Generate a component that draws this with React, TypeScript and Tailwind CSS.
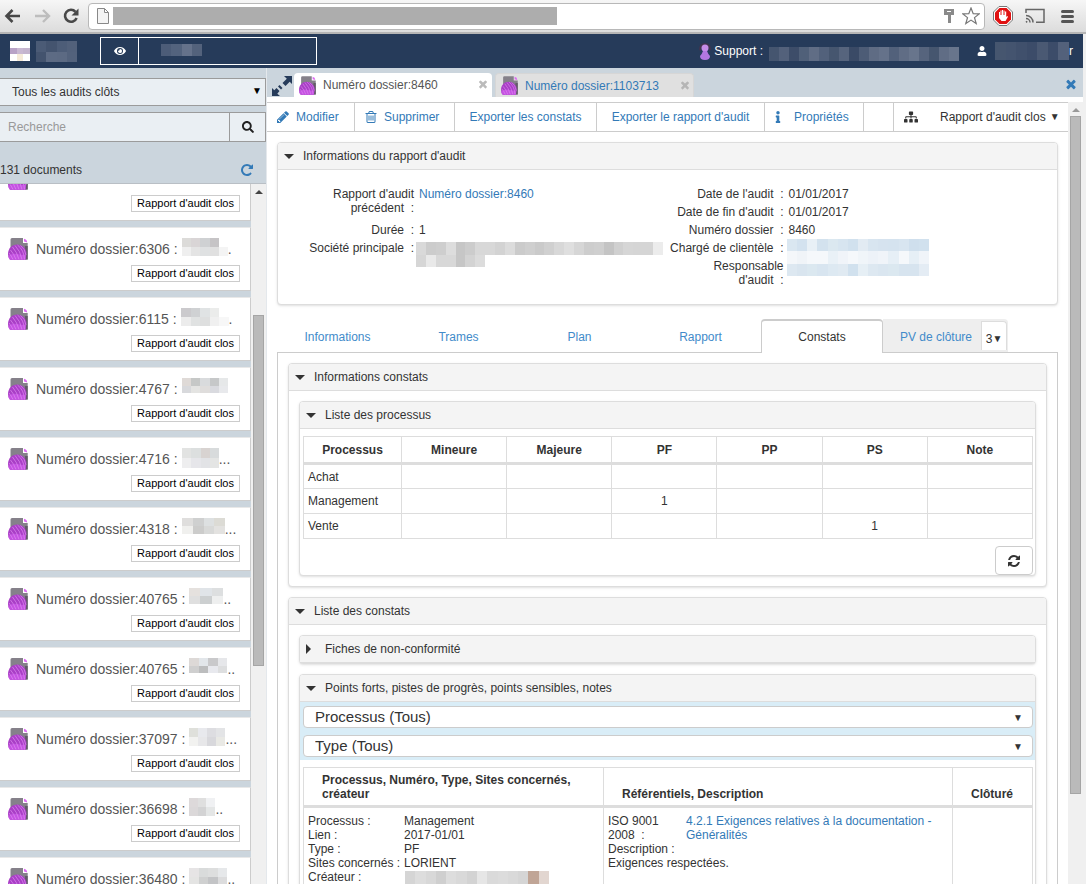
import type { ReactNode } from 'react';
import { FaEye, FaInfo, FaSearch, FaSitemap, FaUser } from 'react-icons/fa';

type IconProps = { d: string; className?: string };

function Glyph({ d, className }: IconProps) {
  return (
    <svg viewBox="0 0 1792 1792" fill="currentColor" aria-hidden="true" className={className}>
      <path d={d} />
    </svg>
  );
}

const PENCIL =
  'M491 1536l91-91-235-235-91 91v107h128v128h107zm523-928q0-22-22-22-10 0-17 7l-542 542q-7 7-7 17 0 22 22 22 10 0 17-7l542-542q7-7 7-17zm-54-192l416 416-832 832h-416v-416zm683 96q0 53-37 90l-166 166-416-416 166-165q36-38 90-38 53 0 91 38l235 234q37 39 37 91z';
const TRASH =
  'M704 736v576q0 14-9 23t-23 9h-64q-14 0-23-9t-9-23v-576q0-14 9-23t23-9h64q14 0 23 9t9 23zm256 0v576q0 14-9 23t-23 9h-64q-14 0-23-9t-9-23v-576q0-14 9-23t23-9h64q14 0 23 9t9 23zm256 0v576q0 14-9 23t-23 9h-64q-14 0-23-9t-9-23v-576q0-14 9-23t23-9h64q14 0 23 9t9 23zm128 724v-948h-896v948q0 22 7 40.5t14.5 27 10.5 8.5h832q3 0 10.5-8.5t14.5-27 7-40.5zm-672-1076h448l-48-117q-7-9-17-11h-317q-10 2-17 11zm928 32v64q0 14-9 23t-23 9h-96v948q0 83-47 143.5t-113 60.5h-832q-66 0-113-58.5t-47-141.5v-952h-96q-14 0-23-9t-9-23v-64q0-14 9-23t23-9h309l70-167q15-37 54-63t79-26h320q40 0 79 26t54 63l70 167h309q14 0 23 9t9 23z';
const TIMES =
  'M1490 1322q0 40-28 68l-136 136q-28 28-68 28t-68-28l-294-294-294 294q-28 28-68 28t-68-28l-136-136q-28-28-28-68t28-68l294-294-294-294q-28-28-28-68t28-68l136-136q28-28 68-28t68 28l294 294 294-294q28-28 68-28t68 28l136 136q28 28 28 68t-28 68l-294 294 294 294q28 28 28 68z';
const REFRESH =
  'M1639 1056q0 5-1 7-64 268-268 434.5t-478 166.5q-146 0-282.5-55t-243.5-157l-129 129q-19 19-45 19t-45-19-19-45v-448q0-26 19-45t45-19h448q26 0 45 19t19 45-19 45l-137 137q71 66 161 102t187 36q134 0 250-65t186-179q11-17 53-117 8-23 30-23h192q13 0 22.5 9.5t9.5 22.5zm25-800v448q0 26-19 45t-45 19h-448q-26 0-45-19t-19-45 19-45l138-138q-148-137-349-137-134 0-250 65t-186 179q-11 17-53 117-8 23-30 23h-199q-13 0-22.5-9.5t-9.5-22.5v-7q65-268 270-434.5t480-166.5q146 0 284 55.5t245 156.5l130-129q19-19 45-19t45 19 19 45z';
const REPEAT =
  'M1664 256v448q0 26-19 45t-45 19h-448q-42 0-59-40-17-39 14-69l138-138q-148-137-349-137-104 0-198.5 40.5t-163.5 109.5-109.5 163.5-40.5 198.5 40.5 198.5 109.5 163.5 163.5 109.5 198.5 40.5q119 0 225-52t179-147q7-10 23-12 15 0 25 9l137 138q9 8 9.5 20.5t-7.5 22.5q-109 132-264 204.5t-327 72.5q-156 0-298-61t-245-164-164-245-61-298 61-298 164-245 245-164 298-61q147 0 284.5 55.5t244.5 156.5l130-129q29-31 70-14 39 17 39 59z';

// Masked value: a grid of flat cells, one string of hex colours per row
function Mosaic({ rows, className }: { rows: string[]; className: string }) {
  return (
    <svg
      viewBox={`0 0 100 ${rows.length * 10}`}
      preserveAspectRatio="none"
      shapeRendering="crispEdges"
      aria-hidden="true"
      className={`shrink-0 ${className}`}
    >
      {rows.map((row, y) => {
        const cells = row.split(' ');
        const w = 100 / cells.length;
        return cells.map((c, x) => (
          <rect key={`${y}-${x}`} x={x * w} y={y * 10} width={w} height="10" fill={`#${c}`} />
        ));
      })}
    </svg>
  );
}

function DocIcon({ className }: { className: string }) {
  return (
    <svg viewBox="0 0 20 22" aria-hidden="true" className={`shrink-0 ${className}`}>
      <path d="M2.500 1.500Q2.500 0 4 0h11v5h4.700v16.500H2.500z" fill="#85818a" />
      <path d="M17 8h2.700v13.500H16z" fill="#625a68" />
      <path d="M16 .8q3 .7 3.200 3.700L16 3.500z" fill="#dd6cf2" />
      <path d="M0 16C0 10.500 4 6.500 9 6.500c5.500 0 9 4 9.500 8.500L17.500 21.800H2Q0 20 0 16z" fill="#a93fc6" />
      <path d="M.3 18Q5 15 9 16t9 1l-.6 4.800H2Q.5 20.500.3 18z" fill="#c552e2" />
      <g fill="none" stroke="#e08df2" strokeWidth=".7">
        <path d="M16.500 21.500Q16 12 9.500 7" />
        <path d="M14 21.500Q12.500 13 7 7.500" />
        <path d="M11 21.500Q9 14 4.500 9" />
        <path d="M8 21.500Q6 16 2.500 12" />
        <path d="M5 21.500Q3.500 18 1 15" />
        <path d="M18 17Q17 10.500 12.500 7.500" />
      </g>
    </svg>
  );
}

function BrowserBar() {
  return (
    <div className="flex h-[34px] shrink-0 items-center border-b-2 border-[#b5b5b5] bg-linear-to-b from-[#f6f6f6] to-[#dcdcdc] pl-1 pr-3">
      <button aria-label="Précédent">
        <svg viewBox="0 0 18 16" className="h-4 w-[18px]" fill="none" stroke="#484848" strokeWidth="2.600">
          <path d="M16 8H3M8.500 2L2.500 8l6 6" />
        </svg>
      </button>
      <button aria-label="Suivant" className="ml-3">
        <svg viewBox="0 0 18 16" className="h-4 w-[18px]" fill="none" stroke="#bdbdbd" strokeWidth="2.400">
          <path d="M1 8h13M9 2l6 6-6 6" />
        </svg>
      </button>
      <button aria-label="Actualiser" className="ml-2.5">
        <svg viewBox="0 0 18 16" className="h-4 w-[18px]">
          <path d="M13.500 3.800A6 6 0 1 0 14.600 10" fill="none" stroke="#484848" strokeWidth="2.600" />
          <path d="M16.500 .5v7h-7z" fill="#484848" />
        </svg>
      </button>
      <div className="ml-2 flex h-[27px] grow items-center rounded-sm border border-[#b8b8b8] bg-white px-2">
        <svg viewBox="0 0 12 16" className="h-4 w-3" fill="#f4f4f4" stroke="#888">
          <path d="M.5.5h7l4 4v11H.5zM7.500.5v4h4" />
        </svg>
        <div className="ml-1 h-[18px] w-[444px] bg-[#adadad]" />
        <svg viewBox="0 0 10 16" className="ml-auto h-4 w-2.5" fill="#8a8a8a">
          <path d="M0 1h10v6H7v8H4V7H0zM3 3v1h4V3z" fillRule="evenodd" />
        </svg>
        <svg viewBox="0 0 18 18" className="-mr-1 ml-2 h-[18px] w-[18px]" fill="none" stroke="#777" strokeWidth="1.200">
          <path d="M9 1l2.200 5.600 6 .3-4.700 3.700 1.700 5.900L9 13.100l-5.200 3.400 1.700-5.900L.8 6.900l6-.3z" />
        </svg>
      </div>
      <svg viewBox="0 0 20 20" className="ml-2 h-5 w-5">
        <path d="M6 .5h8L19.500 6v8L14 19.500H6L.5 14V6z" fill="#fff" stroke="#777" />
        <path d="M6.500 2h7L18 6.500v7L13.500 18h-7L2 13.500v-7z" fill="#e01212" />
        <path d="M6 9V6h1v3h.5V4.500h1V9H9V4h1v5h.5V4.500h1V9h.5V5.500h1.200V11l1-1 .8.800L12.500 15h-4L6 12z" fill="#fff" />
      </svg>
      <svg viewBox="0 0 20 16" className="ml-3 h-4 w-5" fill="none" stroke="#666" strokeWidth="1.500">
        <path d="M1 5V1.500h18v12.700h-8M1 7.500a7 7 0 0 1 7 7M1 10.500a4 4 0 0 1 4 4M1 13.200l1.200 1.200" />
      </svg>
      <button aria-label="Menu" className="ml-4 flex w-[13px] flex-col gap-0.5">
        <span className="h-[3px] rounded-sm bg-[#555]" />
        <span className="h-[3px] rounded-sm bg-[#555]" />
        <span className="h-[3px] rounded-sm bg-[#555]" />
      </button>
    </div>
  );
}

function Header() {
  return (
    <header className="flex h-[34px] shrink-0 items-center bg-[#263b5a] px-2.5 text-white">
      <Mosaic rows={['ffffff ffffff ffffff', 'b8a2c6 c9b8d2 c4b4ce', 'ffffff f5ead8 ffffff']} className="h-5 w-5" />
      <Mosaic rows={['4b5b76 44546f 4d5d78 52617b', '43536e 5d6b84 5c6a83 53627c']} className="ml-1.5 h-[21px] w-[41px]" />
      <div className="ml-[23px] flex h-7 w-[217px] border border-white">
        <button aria-label="Afficher" className="flex w-[38px] items-center justify-center border-r border-white">
          <FaEye className="h-3 w-3" />
        </button>
        <Mosaic rows={['4c5c78 53637e 65728b 53627c']} className="ml-[22px] mt-1.5 h-3 w-[41px]" />
      </div>
      <svg viewBox="0 0 12 17" className="ml-auto h-[17px] w-3" aria-hidden="true">
        <path d="M0 7Q0 0 6 0t6 7l-2 1V5H2v3z" fill="#41344f" />
        <circle cx="6" cy="5" r="3.500" fill="#c58be8" />
        <path d="M4 8h4q1 3 3 5 0 4-5 4t-5-4q2-2 3-5z" fill="#b377e0" />
      </svg>
      <span className="ml-[3px]">Support :</span>
      <Mosaic
        rows={['45556f 53617b 3d4d69 506079 606d85 52617b 46566f 56647d 3a4a66 4d5c76 5f6c84 65728a 52617b 606d85 68758c 56647d 46566f 606d85 68758c']}
        className="ml-1.5 mt-1.5 h-3.5 w-[190px]"
      />
      <FaUser className="ml-[18px] h-2.5 w-2.5" />
      <Mosaic rows={['46566f 44546f 40506c 3c4c69 4a5973 3c4c69 53617b']} className="ml-2 h-[18px] w-[74px]" />
      <span>r</span>
    </header>
  );
}

type Audit = { num?: string; mask: string[]; tail: string; size: string };

const audits: Audit[] = [
  { mask: [], tail: '', size: '' },
  { num: '6306', mask: ['dcdbd9 d9d5d6 cfd1d3 c6c4c6 ffffff', 'efefef e4e4e4 dfe1e2 e0e0e0 f4f4f4'], tail: '.', size: 'h-[18px] w-[46px]' },
  { num: '6115', mask: ['cbcacd cfd1d3 e0e3e4 ebeceb ffffff', 'ececec e0e2e2 dedfdf f0f0f0 f7f7f7'], tail: '.', size: 'h-[18px] w-12' },
  { num: '4767', mask: ['dfdad7 c6c8c7 d9dbdd c6c8c9 e6e8e9', 'd8d9dc e4e4e2 dfdddc d9dadf e8e9ec'], tail: '', size: 'h-[15px] w-[46px]' },
  { num: '4716', mask: ['e2e3e2 dcdfdf d8d3d1 d8dbdc', 'eeeeef e6e6ea e2e3e6 e4e5e4'], tail: '...', size: 'h-5 w-[37px]' },
  { num: '4318', mask: ['dfdedd cfd0d0 dde0e1 dcdbd5', 'f0f0ee cccccb d8d9d8 e3e2e0'], tail: '...', size: 'h-4 w-[43px]' },
  { num: '40765', mask: ['e5e1de e0e4e8 dddfe0', 'dfdfdf cccfd0 eeefef'], tail: '..', size: 'h-4 w-[34px]' },
  { num: '40765', mask: ['ddd9d7 e2e6ea c9c9cb e6e7ea', 'cfcfcf bcbdbe e8e9ee dddedf'], tail: '..', size: 'h-[15px] w-[38px]' },
  { num: '37097', mask: ['dfe0db e8e9ed dddde1 e3e4e6', 'f2f2f0 e7e7e9 d8d8dc e9e9e5'], tail: '...', size: 'h-[18px] w-9' },
  { num: '36698', mask: ['ddd9da dfdfdf f0f1f3', 'dbd8d9 d3d3d4 e4e6e6'], tail: '..', size: 'h-[18px] w-[26px]' },
  { num: '36480', mask: ['e6e4e5 d9dbdb dddede e6e8ea', 'e4e4e3 cfd0d0 c3c4c6 dcdcdd'], tail: '..', size: 'h-[18px] w-[38px]' },
];

function Sidebar() {
  return (
    <aside className="flex w-[267px] shrink-0 flex-col border-r border-[#e4e8ec] bg-[#cbd5dd]">
      <div className="relative mt-2.5">
        <select
          aria-label="Liste"
          className="h-7 w-full appearance-none border border-l-0 border-[#9b9b9b] bg-[#eaeff3] pl-3 text-xs text-[#333]"
        >
          <option>Tous les audits clôts</option>
        </select>
        <span className="pointer-events-none absolute right-1 top-1.5 text-[10px] leading-[14px] text-black">▼</span>
      </div>
      <form className="mt-1.5 flex h-[31px] border border-l-0 border-[#9b9b9b] bg-[#eaeff3]">
        <input
          aria-label="Recherche"
          placeholder="Recherche"
          className="min-w-0 grow pl-2 text-xs placeholder:text-[#999]"
        />
        <button type="button" aria-label="Rechercher" className="flex w-9 items-center justify-center border-l border-[#9b9b9b]">
          <FaSearch className="h-3 w-3 text-[#222]" />
        </button>
      </form>
      <div className="flex h-11 items-end justify-between border-b border-[#b9bfc5] pb-1.5 pr-3">
        <span>131 documents</span>
        <button aria-label="Rafraîchir la liste">
          <Glyph d={REPEAT} className="h-3.5 w-3.5 text-[#337ab7]" />
        </button>
      </div>
      <div className="flex min-h-0 grow overflow-hidden">
        <ul className="-mt-[27px] flex h-max min-w-0 grow flex-col gap-1.5">
          {audits.map((a, i) => (
            <li key={i} className="flex h-16 flex-col border border-l-0 border-[#ccc] border-t-[#e8e8e8] bg-white pl-2 pr-2.5 pt-2.5">
              <div className="flex h-[22px] text-sm leading-[22px] text-[#555]">
                <DocIcon className="mr-2 h-[22px] w-5" />
                {a.num && (
                  <>
                    <span className="whitespace-nowrap">Numéro dossier:{a.num} :</span>
                    <Mosaic rows={a.mask} className={`ml-1 ${a.size}`} />
                    <span>{a.tail}</span>
                  </>
                )}
              </div>
              <span className="mt-[5px] h-[17px] self-end border border-[#ccc] px-[5px] text-[11px] leading-[15px] text-black">
                Rapport d'audit clos
              </span>
            </li>
          ))}
        </ul>
        <div className="flex w-[15px] shrink-0 flex-col items-center bg-[#f0f0f0]">
          <span className="mt-1.5 border-x-4 border-b-4 border-x-transparent border-b-[#444]" />
          <div className="mt-[121px] h-[351px] w-[11px] border border-[#a5a5a5] bg-[#bababa]" />
        </div>
      </div>
    </aside>
  );
}

function DocTabs() {
  return (
    <div className="flex h-[29px] shrink-0 items-end bg-[#cbd5dd] pr-[5px]">
      <button aria-label="Agrandir" className="ml-[5px] pb-px">
        <svg viewBox="0 0 20 20" className="h-5 w-5" fill="#263b5a">
          <path d="M20 0v8l-2.300-2.300-4.200 4.300-3-3 4.300-4.200L12 0z" />
          <path d="M0 20v-8l2.300 2.300 2.200-2.300 3 3-2.200 2.700L8 20z" />
          <path d="M7.500 9l3 3-1.500 1.500-3-3z" />
        </svg>
      </button>
      <div className="ml-0.5 flex h-6 w-[198px] items-center rounded-t bg-white pl-[5px] pr-[3px]">
        <DocIcon className="h-[19px] w-[17px]" />
        <span className="ml-[7px] text-[#555]">Numéro dossier:8460</span>
        <button aria-label="Fermer" className="ml-auto pb-0.5">
          <Glyph d={TIMES} className="h-3 w-3 text-[#bbb]" />
        </button>
      </div>
      <div className="ml-[3px] flex h-6 w-[199px] items-center rounded-t border border-b-0 border-[#d6d6d6] bg-[#e0e0e0] pl-[5px] pr-0.5">
        <DocIcon className="h-[19px] w-[17px]" />
        <a href="#" className="ml-[7px] text-[#337ab7]">Numéro dossier:1103713</a>
        <button aria-label="Fermer" className="ml-auto pb-0.5">
          <Glyph d={TIMES} className="h-3 w-3 text-[#b5b5b5]" />
        </button>
      </div>
      <button aria-label="Tout fermer" className="ml-auto self-center pt-0.5">
        <Glyph d={TIMES} className="h-3.5 w-3.5 text-[#337ab7]" />
      </button>
    </div>
  );
}

function Toolbar() {
  const cell = 'flex shrink-0 items-center border-r border-[#ccc]';
  return (
    <div className="flex h-[30px] border-y border-[#ccc] text-[#337ab7]">
      <button className={`${cell} w-[88px] pl-[9px]`}>
        <Glyph d={PENCIL} className="mr-1.5 h-3.5 w-3.5" />
        Modifier
      </button>
      <button className={`${cell} w-[100px] pl-[9px]`}>
        <Glyph d={TRASH} className="mr-1.5 h-3.5 w-3.5" />
        Supprimer
      </button>
      <button className={`${cell} w-[142px] justify-center`}>Exporter les constats</button>
      <button className={`${cell} w-[168px] justify-center`}>Exporter le rapport d'audit</button>
      <button className={`${cell} w-[99px] pl-[7px]`}>
        <FaInfo className="mr-2.5 h-3 w-3" />
        Propriétés
      </button>
      <div className={`${cell} w-[30px]`} />
      <button className="flex grow items-center pl-2.5 text-[#333]">
        <FaSitemap className="mr-[22px] h-3.5 w-3.5" />
        Rapport d'audit clos
        <span className="ml-1 text-[10px]">▼</span>
      </button>
    </div>
  );
}

type PanelProps = { title: string; open?: boolean; className?: string; children?: ReactNode };

function Panel({ title, open = true, className = '', children }: PanelProps) {
  return (
    <section className={`rounded border border-[#ddd] bg-white shadow-sm ${className}`}>
      <button
        aria-expanded={open}
        className="flex h-[27px] w-full items-center rounded-t-[3px] border-b border-[#ddd] bg-[#f4f4f4] pl-1.5 text-left"
      >
        <span className="flex w-[19px]">
          {open ? (
            <span className="border-x-5 border-t-5 border-x-transparent border-t-[#333]" />
          ) : (
            <span className="border-y-5 border-l-5 border-y-transparent border-l-[#333]" />
          )}
        </span>
        {title}
      </button>
      {children}
    </section>
  );
}

function Label({ text, className = '' }: { text: string; className?: string }) {
  return <dt className={`pr-px text-right ${className}`}>{`${text}\u00a0\u00a0:`}</dt>;
}

function ReportInfo() {
  return (
    <Panel title="Informations du rapport d'audit" className="h-[163px]">
      <div className="mx-5 mt-[17px] grid grid-cols-2">
        <dl className="grid auto-rows-[18px] grid-cols-[117px_1fr] content-start gap-x-1">
          <Label text="Rapport d'audit précédent" className="row-span-2" />
          <dd className="row-span-2">
            <a href="#" className="text-[#337ab7]">Numéro dossier:8460</a>
          </dd>
          <Label text="Durée" />
          <dd>1</dd>
          <Label text="Société principale" />
          <dd className="row-span-2 -ml-[3px] pt-px">
            <Mosaic
              rows={[
                'd9d9d9 cccccc cecece dddddd c6c6c6 cccccc d8d8d8 d8d8d8 d3d3d3 dcdcdc cbcbcb cfcfcf cacaca d0d0d0 d8d8d8 dfdfdf d6d6d6 cdcdcd cfcfcf c4c4c4 d0d0d0 d6d6d6 d5d5d5 d5d5d5 ececec',
                'd6d6d6 e9e9e9 d8d8d8 d8d8d8 c6c6c6 d3d3d3 dcdcdc ffffff ffffff ffffff ffffff ffffff ffffff ffffff ffffff ffffff ffffff ffffff ffffff ffffff ffffff ffffff ffffff ffffff ffffff',
              ]}
              className="h-[25px] w-[247px]"
            />
          </dd>
        </dl>
        <dl className="grid auto-rows-[18px] grid-cols-[117px_1fr] content-start gap-x-1">
          <Label text="Date de l'audit" />
          <dd>01/01/2017</dd>
          <Label text="Date de fin d'audit" />
          <dd>01/01/2017</dd>
          <Label text="Numéro dossier" />
          <dd>8460</dd>
          <Label text="Chargé de clientèle" />
          <dd className="row-span-2 -ml-0.5 -mt-0.5">
            <Mosaic
              rows={[
                'dae7f1 d3e2ef e8f0f6 d3e2ee dbe8f0 d7e5f0 d1e1ee e2ebf3 d8e5f0 d6e3ef d5e3ef d8e5f0 cfdfed d1e1ee',
                'f4f7fa f0f4f8 f5f8fb f5f8fb e9f1f7 f0f4f9 f5f8fb f0f5f9 edf2f8 f0f4f9 e6eff6 f5f8fb e6eff6 f0f4f9',
                'dde8f1 d9e5ef dbe8f0 d8e5f0 dde9f2 e0eaf2 d1e1ee e6eff5 dde8f1 dae6f0 dbe8f0 d7e4ef d7e4ef e4ecf4',
              ]}
              className="h-[37px] w-[142px]"
            />
          </dd>
          <Label text="Responsable d'audit" />
        </dl>
      </div>
    </Panel>
  );
}

const columns = ['Processus', 'Mineure', 'Majeure', 'PF', 'PP', 'PS', 'Note'];
const processes = [
  ['Achat', '', '', '', '', '', ''],
  ['Management', '', '', '1', '', '', ''],
  ['Vente', '', '', '', '', '1', ''],
];

function ProcessTable() {
  return (
    <table className="w-full table-fixed border-collapse border border-[#ddd]">
      <colgroup>
        <col className="w-[98px]" />
        <col span={6} />
      </colgroup>
      <thead>
        <tr className="h-[27px] border-b-3 border-[#ddd]">
          {columns.map((c) => (
            <th key={c} className="border-x border-[#ddd] text-center">{c}</th>
          ))}
        </tr>
      </thead>
      <tbody>
        {processes.map((row) => (
          <tr key={row[0]} className="h-[25px]">
            {row.map((v, i) => (
              <td key={i} className={i === 0 ? 'border border-[#ddd] pl-1' : 'border border-[#ddd] text-center'}>
                {v}
              </td>
            ))}
          </tr>
        ))}
      </tbody>
    </table>
  );
}

function Filter({ label }: { label: string }) {
  return (
    <div className="relative">
      <select
        aria-label={label}
        className="block h-[22px] w-full appearance-none rounded border border-[#ccc] bg-white pl-[11px] text-[15px] leading-5 text-[#333]"
      >
        <option>{label} (Tous)</option>
      </select>
      <span className="pointer-events-none absolute right-2.5 top-1 text-[10px] leading-4">▼</span>
    </div>
  );
}

function FindingsTable() {
  return (
    <table className="w-full table-fixed border-collapse border border-[#ddd]">
      <colgroup>
        <col className="w-[300px]" />
        <col />
        <col className="w-[80px]" />
      </colgroup>
      <thead>
        <tr className="h-[39px] border-b-3 border-[#ddd] text-left align-bottom">
          <th className="border-x border-[#ddd] px-[18px] pb-1">Processus, Numéro, Type, Sites concernés, créateur</th>
          <th className="border-x border-[#ddd] px-[18px] pb-1">Référentiels, Description</th>
          <th className="border-x border-[#ddd] px-[18px] pb-1">Clôturé</th>
        </tr>
      </thead>
      <tbody>
        <tr className="align-top">
          <td className="border border-[#ddd] pl-1 pt-1.5">
            <dl className="grid grid-cols-[96px_1fr]">
              <dt>Processus :</dt>
              <dd>Management</dd>
              <dt>Lien :</dt>
              <dd>2017-01/01</dd>
              <dt>Type :</dt>
              <dd>PF</dd>
              <dt className="whitespace-nowrap">Sites concernés :</dt>
              <dd>LORIENT</dd>
              <dt>Créateur :</dt>
              <dd>
                <Mosaic
                  rows={['d5d5d5 dddddd d8d8d8 cfcfcf dddddd d9d9d9 d3d3d3 e6e6e6 dadada dcdcdc d9d9d9 d5d5d5 c0a596 e2d6d0']}
                  className="ml-px mt-px h-4 w-36"
                />
              </dd>
            </dl>
          </td>
          <td className="border border-[#ddd] pl-1 pt-1.5">
            <div className="grid grid-cols-[78px_1fr] pr-4">
              <span className="pr-4">{'ISO 9001 2008\u00a0\u00a0:'}</span>
              <a href="#" className="text-[#337ab7]">4.2.1 Exigences relatives à la documentation - Généralités</a>
            </div>
            <p>Description :</p>
            <p>Exigences respectées.</p>
          </td>
          <td className="border border-[#ddd]" />
        </tr>
      </tbody>
    </table>
  );
}

function ReportTabs() {
  return (
    <nav className="mt-3.5 flex h-[34px] border-b border-[#ccc]">
      {['Informations', 'Trames', 'Plan', 'Rapport'].map((t) => (
        <a key={t} href="#" className="flex w-[121px] items-center justify-center pt-0.5 text-[#428bca]">
          {t}
        </a>
      ))}
      <a
        href="#"
        aria-current="page"
        className="-mb-px flex w-[122px] items-center justify-center rounded-t border border-t-2 border-b-0 border-[#ccc] bg-white"
      >
        Constats
      </a>
      <div className="flex rounded-tr bg-[#eee] pr-px">
        <a href="#" className="flex w-[98px] items-center justify-center pl-2 pt-0.5 text-[#428bca]">PV de clôture</a>
        <button aria-label="3 autres onglets" className="mb-0.5 mt-0.5 flex w-[26px] items-center justify-center rounded-tr border border-[#ddd] border-b-0 bg-white pt-1.5">
          3<span className="text-[10px]">▼</span>
        </button>
      </div>
    </nav>
  );
}

function Content() {
  return (
    <div className="min-w-0 grow">
      <Toolbar />
      <div className="mx-2.5 mt-2.5">
        <ReportInfo />
        <ReportTabs />
        <div className="space-y-2.5 border-x border-[#ccc] p-2.5">
          <Panel title="Informations constats">
            <div className="p-2.5">
              <Panel title="Liste des processus">
                <div className="pl-[3px] pr-0.5 pt-[7px]">
                  <ProcessTable />
                  <div className="mt-[7px] flex justify-end">
                    <button aria-label="Rafraîchir" className="flex h-[29px] w-[38px] items-center justify-center rounded border border-[#ccc] bg-white">
                      <Glyph d={REFRESH} className="h-3.5 w-3.5" />
                    </button>
                  </div>
                </div>
              </Panel>
            </div>
          </Panel>
          <Panel title="Liste des constats">
            <div className="space-y-2.5 p-2.5">
              <Panel title="Fiches de non-conformité" open={false} />
              <Panel title="Points forts, pistes de progrès, points sensibles, notes">
                <div className="flex flex-col gap-[7px] bg-[#d9edf7] pb-[3px] pl-[3px] pr-0.5 pt-1">
                  <Filter label="Processus" />
                  <Filter label="Type" />
                </div>
                <div className="pb-[3px] pl-[3px] pr-0.5 pt-[7px]">
                  <FindingsTable />
                </div>
              </Panel>
            </div>
          </Panel>
        </div>
      </div>
    </div>
  );
}

export default function App() {
  return (
    <div className="flex h-screen flex-col overflow-hidden bg-white font-['Liberation_Sans',Arial,sans-serif] text-xs leading-[14px] text-[#333]">
      <BrowserBar />
      <div className="flex min-h-0 grow flex-col border-r-3 border-[#f0f0f0]">
        <Header />
        <div className="flex min-h-0 grow">
          <Sidebar />
          <main className="flex min-w-0 grow flex-col">
            <DocTabs />
            <div className="mt-[5px] flex min-h-0 grow overflow-hidden">
              <Content />
              <div className="flex w-[15px] shrink-0 flex-col items-center bg-[#f0f0f0]">
                <span className="mt-1.5 border-x-4 border-b-4 border-x-transparent border-b-[#999]" />
                <div className="mt-1 h-[678px] w-[11px] border border-[#a5a5a5] bg-[#bababa]" />
              </div>
            </div>
          </main>
        </div>
      </div>
    </div>
  );
}
